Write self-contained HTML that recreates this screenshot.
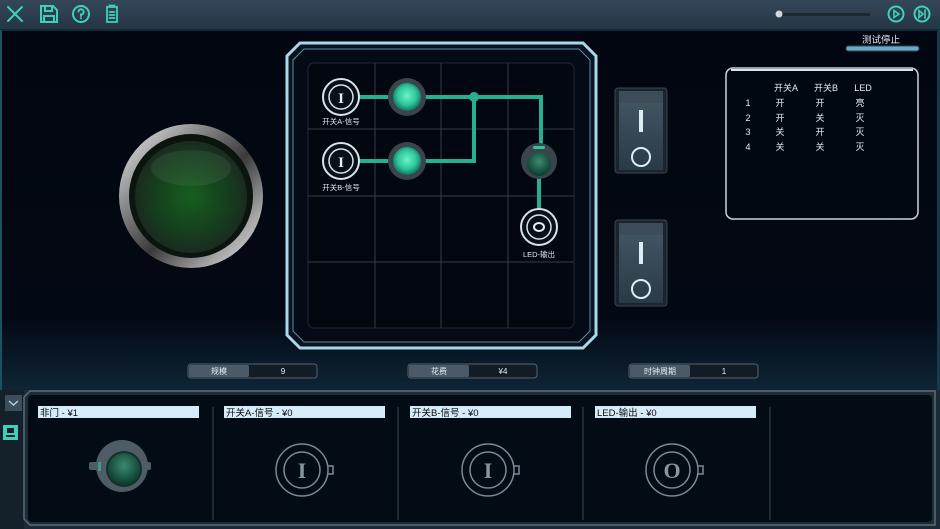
<!DOCTYPE html>
<html><head><meta charset="utf-8"><style>
html,body{margin:0;padding:0;width:940px;height:529px;overflow:hidden;background:#07121c}
svg{display:block}
text{font-family:"Liberation Sans","Noto Sans CJK SC",sans-serif}
text.serif{font-family:"Liberation Serif",serif}
</style></head><body>
<svg width="940" height="529" viewBox="0 0 940 529" xmlns="http://www.w3.org/2000/svg">
<defs>
<linearGradient id="top" x1="0" y1="0" x2="0" y2="1"><stop offset="0" stop-color="#34475a"/><stop offset="1" stop-color="#243544"/></linearGradient>
<linearGradient id="main" x1="0" y1="0" x2="0" y2="1"><stop offset="0" stop-color="#020610"/><stop offset="0.8" stop-color="#030914"/><stop offset="1" stop-color="#0e2535"/></linearGradient>
<linearGradient id="chrome" x1="0" y1="0" x2="1" y2="1"><stop offset="0" stop-color="#f0f0f0"/><stop offset="0.3" stop-color="#8a8a8a"/><stop offset="0.55" stop-color="#3a3a3a"/><stop offset="0.8" stop-color="#a8a8a8"/><stop offset="1" stop-color="#e8e8e8"/></linearGradient>
<radialGradient id="bigg" cx="0.5" cy="0.5" r="0.55"><stop offset="0" stop-color="#175e1f"/><stop offset="0.6" stop-color="#163e1e"/><stop offset="1" stop-color="#1a2620"/></radialGradient>
<radialGradient id="gl" cx="0.5" cy="0.45" r="0.55"><stop offset="0" stop-color="#6ff0c8"/><stop offset="0.6" stop-color="#2ec79a"/><stop offset="1" stop-color="#12765a"/></radialGradient>
<radialGradient id="dg" cx="0.5" cy="0.4" r="0.6"><stop offset="0" stop-color="#3a8a70"/><stop offset="1" stop-color="#0c3a2c"/></radialGradient>
<linearGradient id="sw" x1="0" y1="0" x2="0" y2="1"><stop offset="0" stop-color="#445866"/><stop offset="1" stop-color="#2a3a46"/></linearGradient>
</defs>
<rect x="0" y="0" width="940" height="29" fill="url(#top)"/>
<g stroke="#3fd0bc" stroke-width="2" fill="none" stroke-linecap="round">
<path d="M8 7 L22 21 M22 7 L8 21"/>
<path d="M41 6 H53 L57 10 V22 H41 Z M45 6 V11 H52 V6 M44 22 V16 H54 V22"/>
<circle cx="81" cy="14" r="8"/>
<path d="M78.5 11.5 A2.6 2.6 0 1 1 81 14.5 V16"/>
<path d="M107 7 H117 V22 H107 Z M109.5 7 V5.5 H114.5 V7 M109.5 12 H114.5 M109.5 15 H114.5 M109.5 18 H114.5" stroke-width="1.8"/>
<circle cx="896" cy="14" r="7.5"/><path d="M894 10.5 L899 14 L894 17.5 Z" stroke-width="1.6"/>
<circle cx="922" cy="14" r="7.5"/><path d="M919 10.5 L923 14 L919 17.5 Z M925 10 V18" stroke-width="1.6"/>
</g>
<circle cx="81" cy="18.3" r="1" fill="#3fd0bc"/>
<rect x="778" y="13" width="92" height="3" rx="1.5" fill="#1a2630"/>
<circle cx="779" cy="14" r="3.5" fill="#cfd6dc"/>
<rect x="0" y="29" width="940" height="361" fill="url(#main)"/>
<rect x="0" y="29" width="940" height="2" fill="#0f2a38"/>
<rect x="0" y="30" width="2" height="360" fill="#1a5360"/>
<rect x="937" y="30" width="3" height="360" fill="#17384a"/>
<circle cx="191" cy="196" r="72" fill="url(#chrome)"/>
<circle cx="191" cy="196" r="62" fill="#0c1410"/>
<circle cx="191" cy="197" r="56" fill="url(#bigg)"/>
<ellipse cx="191" cy="168" rx="40" ry="18" fill="#8ab096" opacity="0.12"/>
<path d="M300 43 H583 L596 56 V335 L583 348 H300 L287 335 V56 Z" fill="#0a1420" stroke="#a9d8ea" stroke-width="3"/>
<path d="M304 49 H579 L590 60 V331 L579 342 H304 L293 331 V60 Z" fill="#050b16" stroke="#5b8da3" stroke-width="1"/>
<rect x="308" y="63" width="266" height="265" rx="6" fill="#03070f" stroke="#1e2a36"/>
<g stroke="#323e4a" stroke-width="1">
<line x1="375" y1="63" x2="375" y2="328"/><line x1="441" y1="63" x2="441" y2="328"/><line x1="508" y1="63" x2="508" y2="328"/>
<line x1="308" y1="129" x2="574" y2="129"/><line x1="308" y1="196" x2="574" y2="196"/><line x1="308" y1="262" x2="574" y2="262"/>
</g>
<g stroke="#27b08e" stroke-width="4" fill="none">
<path d="M358 97 H390 M358 161 H390"/>
<path d="M425 97 H541 V145"/>
<path d="M425 161 H474 V97"/>
<path d="M539 178 V212"/>
</g>
<circle cx="474" cy="97" r="5" fill="#27b08e"/>
<g>
<circle cx="341" cy="97" r="18" fill="#0a1018" stroke="#d8e4ea" stroke-width="2"/><circle cx="341" cy="97" r="12" fill="none" stroke="#d8e4ea" stroke-width="1.5"/>
<text class="serif" x="341" y="103" font-size="15" font-weight="bold" fill="#e8eef2" text-anchor="middle">I</text>
<circle cx="341" cy="161" r="18" fill="#0a1018" stroke="#d8e4ea" stroke-width="2"/><circle cx="341" cy="161" r="12" fill="none" stroke="#d8e4ea" stroke-width="1.5"/>
<text class="serif" x="341" y="167" font-size="15" font-weight="bold" fill="#e8eef2" text-anchor="middle">I</text>
<text x="341" y="124" font-size="7.5" fill="#e0e8ee" text-anchor="middle">开关A-信号</text>
<text x="341" y="190" font-size="7.5" fill="#e0e8ee" text-anchor="middle">开关B-信号</text>
<circle cx="407" cy="97" r="19" fill="#3a444c"/><circle cx="407" cy="97" r="14" fill="url(#gl)"/>
<circle cx="407" cy="161" r="19" fill="#3a444c"/><circle cx="407" cy="161" r="14" fill="url(#gl)"/>
<circle cx="539" cy="161" r="18" fill="#3a444c"/><circle cx="539" cy="164" r="12" fill="url(#dg)"/><rect x="533" y="146" width="12" height="3" rx="1.5" fill="#2ec79a"/>
<circle cx="539" cy="227" r="18" fill="#0a1018" stroke="#d8e4ea" stroke-width="2"/><circle cx="539" cy="227" r="12" fill="none" stroke="#d8e4ea" stroke-width="1.5"/>
<ellipse cx="539" cy="227" rx="5" ry="4" fill="none" stroke="#e8eef2" stroke-width="2"/>
<text x="539" y="257" font-size="7.5" fill="#e0e8ee" text-anchor="middle">LED-输出</text>
</g>
<g>
<rect x="615" y="88" width="52" height="85" rx="3" fill="#1b242c" stroke="#39454e"/>
<rect x="619" y="91" width="44" height="79" fill="url(#sw)"/><rect x="619" y="91" width="44" height="12" fill="#3c4c58"/>
<rect x="639" y="110" width="4" height="22" fill="#dceef4"/><circle cx="641" cy="157" r="9" fill="none" stroke="#dceef4" stroke-width="2"/>
<rect x="615" y="220" width="52" height="86" rx="3" fill="#1b242c" stroke="#39454e"/>
<rect x="619" y="223" width="44" height="80" fill="url(#sw)"/><rect x="619" y="223" width="44" height="12" fill="#3c4c58"/>
<rect x="639" y="242" width="4" height="22" fill="#dceef4"/><circle cx="641" cy="289" r="9" fill="none" stroke="#dceef4" stroke-width="2"/>
</g>
<text x="881" y="43" font-size="9.5" fill="#e6eef2" text-anchor="middle">测试停止</text>
<rect x="846" y="46" width="73" height="5" rx="2.5" fill="#6aaac4" stroke="#2e4c5c"/>
<rect x="726" y="68" width="192" height="151" rx="7" fill="#020812" stroke="#c7d4dc" stroke-width="1.5"/>
<path d="M731 70 H913" stroke="#d8e4ea" stroke-width="2"/>
<g font-size="9" fill="#e6eef2" text-anchor="middle">
<text x="786" y="91">开关A</text><text x="826" y="91">开关B</text><text x="863" y="91">LED</text>
<text x="748" y="106">1</text><text x="780" y="106">开</text><text x="820" y="106">开</text><text x="860" y="106">亮</text>
<text x="748" y="121">2</text><text x="780" y="121">开</text><text x="820" y="121">关</text><text x="860" y="121">灭</text>
<text x="748" y="135">3</text><text x="780" y="135">关</text><text x="820" y="135">开</text><text x="860" y="135">灭</text>
<text x="748" y="150">4</text><text x="780" y="150">关</text><text x="820" y="150">关</text><text x="860" y="150">灭</text>
</g>
<g font-size="8" fill="#e6eef2" text-anchor="middle">
<rect x="188" y="364" width="129" height="14" rx="3" fill="#121c26" stroke="#56646e"/><rect x="189" y="365" width="60" height="12" rx="2" fill="#4a5a68"/>
<text x="219" y="374">规模</text><text x="283" y="374">9</text>
<rect x="408" y="364" width="129" height="14" rx="3" fill="#121c26" stroke="#56646e"/><rect x="409" y="365" width="60" height="12" rx="2" fill="#4a5a68"/>
<text x="439" y="374">花费</text><text x="503" y="374">¥4</text>
<rect x="629" y="364" width="129" height="14" rx="3" fill="#121c26" stroke="#56646e"/><rect x="630" y="365" width="60" height="12" rx="2" fill="#4a5a68"/>
<text x="660" y="374">时钟周期</text><text x="724" y="374">1</text>
</g>
<rect x="0" y="390" width="940" height="139" fill="#1b2a36"/>
<rect x="0" y="390" width="24" height="139" fill="#14202a"/>
<path d="M30 391 H935 V525 H30 L24 519 V397 Z" fill="#1e2c38" stroke="#5a6c78" stroke-width="1.5"/>
<rect x="28" y="395" width="904" height="127" rx="4" fill="#030c14"/>
<path d="M5 395 H22 V411 H5 Z" fill="#3c4e5c"/><path d="M9 401 L13.5 405 L18 401" stroke="#b8ccd8" stroke-width="1.5" fill="none"/>
<rect x="3" y="425" width="15" height="15" fill="#3fd0bc"/><rect x="7" y="428" width="7" height="5" fill="#14202a"/><rect x="6" y="435" width="9" height="2" fill="#14202a"/>
<g stroke="#2a3540" stroke-width="1.5"><line x1="213" y1="407" x2="213" y2="520"/><line x1="398" y1="407" x2="398" y2="520"/><line x1="583" y1="407" x2="583" y2="520"/><line x1="770" y1="407" x2="770" y2="520"/></g>
<g font-size="9.5" fill="#0a0a0a">
<rect x="38" y="406" width="161" height="12" fill="#d6ecf8"/><text x="40" y="416">非门 - ¥1</text>
<rect x="224" y="406" width="161" height="12" fill="#d6ecf8"/><text x="226" y="416">开关A-信号 - ¥0</text>
<rect x="410" y="406" width="161" height="12" fill="#d6ecf8"/><text x="412" y="416">开关B-信号 - ¥0</text>
<rect x="595" y="406" width="161" height="12" fill="#d6ecf8"/><text x="597" y="416">LED-输出 - ¥0</text>
</g>
<rect x="89" y="462" width="62" height="8" rx="2" fill="#4e5c66"/>
<circle cx="122" cy="466" r="26" fill="#4e5c66"/><circle cx="124" cy="469" r="18" fill="#16302a"/><circle cx="124" cy="469" r="16" fill="url(#dg)"/>
<rect x="98" y="462" width="3" height="9" fill="#2ec79a" opacity="0.6"/>
<g fill="none" stroke="#7c8a94" stroke-width="1.5">
<circle cx="302" cy="470" r="26"/><circle cx="302" cy="470" r="18"/><path d="M328 466 h5 v8 h-5"/>
<circle cx="488" cy="470" r="26"/><circle cx="488" cy="470" r="18"/><path d="M514 466 h5 v8 h-5"/>
<circle cx="672" cy="470" r="26"/><circle cx="672" cy="470" r="18"/><path d="M698 466 h5 v8 h-5"/>
</g>
<g font-weight="bold" font-size="22" fill="#8a969e" text-anchor="middle">
<text class="serif" x="302" y="478">I</text><text class="serif" x="488" y="478">I</text><text class="serif" x="672" y="478">O</text>
</g>
</svg>
</body></html>
